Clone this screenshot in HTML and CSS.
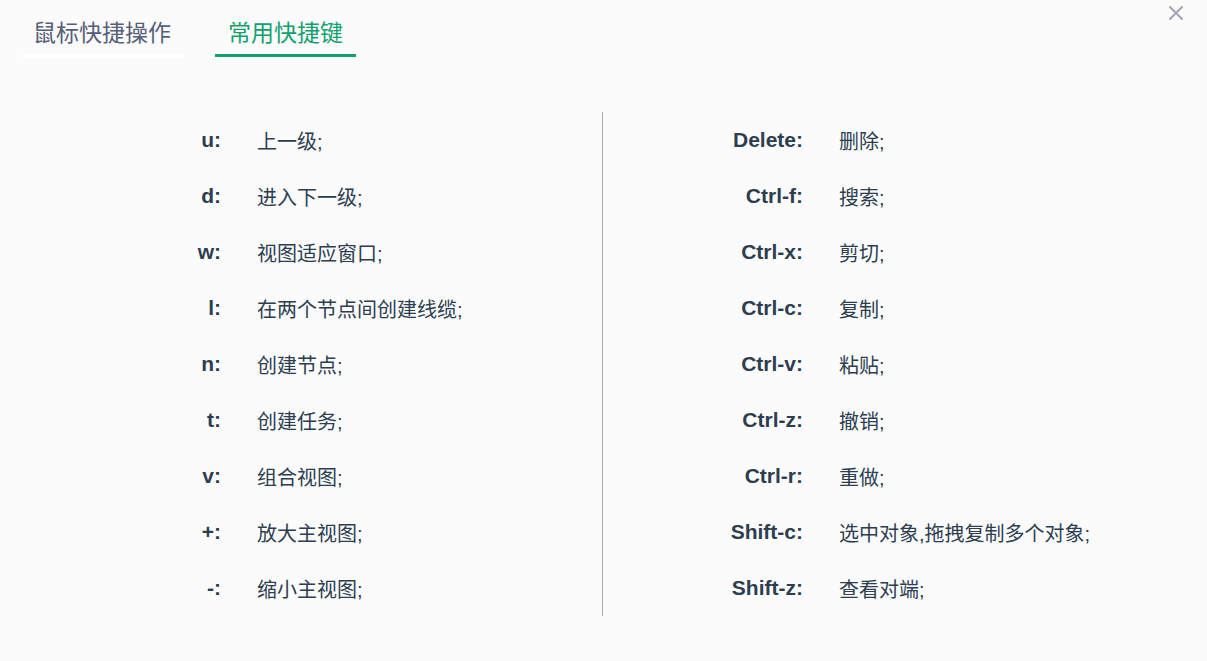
FILE: index.html
```html
<!DOCTYPE html>
<html lang="zh-CN">
<head>
<meta charset="utf-8">
<title>快捷键</title>
<link rel="stylesheet" href="styles.css">
</head>
<body>
<div class="dialog">
  <button class="close" aria-label="关闭">
    <svg width="16" height="16" viewBox="0 0 16 16"><path d="M2 2 L14 14 M14 2 L2 14" stroke="#a3a6ae" stroke-width="2" stroke-linecap="round" fill="none"/></svg>
  </button>
  <div class="tabs">
    <div class="tab">鼠标快捷操作</div>
    <div class="tab active">常用快捷键</div>
  </div>
  <div class="content">
    <div class="col col-left">
      <div class="row"><span class="key">u:</span><span class="desc">上一级;</span></div>
      <div class="row"><span class="key">d:</span><span class="desc">进入下一级;</span></div>
      <div class="row"><span class="key">w:</span><span class="desc">视图适应窗口;</span></div>
      <div class="row"><span class="key">l:</span><span class="desc">在两个节点间创建线缆;</span></div>
      <div class="row"><span class="key">n:</span><span class="desc">创建节点;</span></div>
      <div class="row"><span class="key">t:</span><span class="desc">创建任务;</span></div>
      <div class="row"><span class="key">v:</span><span class="desc">组合视图;</span></div>
      <div class="row"><span class="key">+:</span><span class="desc">放大主视图;</span></div>
      <div class="row"><span class="key">-:</span><span class="desc">缩小主视图;</span></div>
    </div>
    <div class="col col-right">
      <div class="row"><span class="key">Delete:</span><span class="desc">删除;</span></div>
      <div class="row"><span class="key">Ctrl-f:</span><span class="desc">搜索;</span></div>
      <div class="row"><span class="key">Ctrl-x:</span><span class="desc">剪切;</span></div>
      <div class="row"><span class="key">Ctrl-c:</span><span class="desc">复制;</span></div>
      <div class="row"><span class="key">Ctrl-v:</span><span class="desc">粘贴;</span></div>
      <div class="row"><span class="key">Ctrl-z:</span><span class="desc">撤销;</span></div>
      <div class="row"><span class="key">Ctrl-r:</span><span class="desc">重做;</span></div>
      <div class="row"><span class="key">Shift-c:</span><span class="desc">选中对象,拖拽复制多个对象;</span></div>
      <div class="row"><span class="key">Shift-z:</span><span class="desc">查看对端;</span></div>
    </div>
  </div>
</div>
</body>
</html>
```
FILE: styles.css
```css
html, body {
  margin: 0;
  padding: 0;
  background: #fbfbfc;
}
body {
  font-family: "Liberation Sans", "Noto Sans CJK SC", sans-serif;
  color: #2c3e50;
}
.dialog {
  position: relative;
  width: 1207px;
  height: 661px;
  padding: 0 20px;
  box-sizing: border-box;
}
.close {
  position: absolute;
  top: 5px;
  right: 23px;
  width: 16px;
  height: 16px;
  padding: 0;
  border: 0;
  background: none;
  display: block;
}
.close svg { display: block; }
.tabs {
  display: flex;
  align-items: flex-start;
  gap: 31px;
  height: 60px;
}
.tab {
  height: 57px;
  box-sizing: border-box;
  padding: 7px 13px 0;
  display: flex;
  align-items: center;
  font-size: 23px;
  color: #566079;
  border-bottom: 2px solid #ffffff;
}
.tab.active {
  color: #12a06e;
  border-bottom: 3px solid #12a06e;
}
.content {
  display: flex;
  margin-top: 52px;
}
.col {
  display: flex;
  flex-direction: column;
}
.col-left {
  flex: 0 0 582px;
}
.col-right {
  flex: 1;
  border-left: 1px solid #a9abae;
}
.row {
  height: 56px;
  display: flex;
  align-items: center;
  gap: 36px;
  font-size: 20px;
}
.key {
  width: 201px;
  text-align: right;
  font-weight: bold;
  font-size: 21px;
  color: #2c3e50;
}
.col-right .key {
  width: 200px;
}
.desc {
  color: #2c3e50;
}
```
